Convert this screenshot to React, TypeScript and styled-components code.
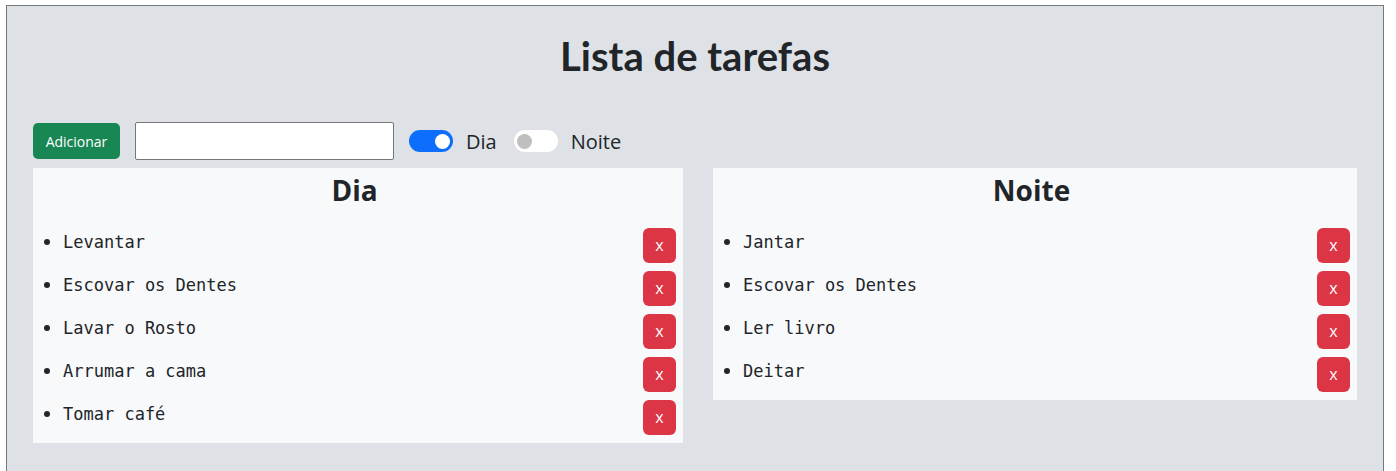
import React, { useState } from "react";
import styled, { createGlobalStyle } from "styled-components";

const GlobalStyle = createGlobalStyle`
  html, body { margin: 0; padding: 0; background: #ffffff; }
  body { font-family: "Open Sans", "Noto Sans", sans-serif; color: #212529; }
  * { box-sizing: border-box; }
`;

const Page = styled.div`
  width: 1378px;
  margin: 5px 0 0 6px;
  border: 1px solid #76797c;
  background: #dee2e6;
  padding: 26px 26px 40px;
`;

const Title = styled.h1`
  margin: 0 0 42px;
  font-family: "Lato", "Open Sans", sans-serif;
  font-size: 40px;
  line-height: 48px;
  font-weight: 700;
  text-align: center;
  color: #212529;
`;

const Toolbar = styled.div`
  display: flex;
  align-items: center;
  height: 38px;
  margin-bottom: 8px;
`;

const AddButton = styled.button`
  width: 87px;
  height: 36px;
  margin-right: 15px;
  border: none;
  border-radius: 5px;
  background: #198754;
  color: #ffffff;
  font-family: "Open Sans", sans-serif;
  font-size: 14px;
  padding: 0;
  cursor: pointer;
`;

const TaskInput = styled.input`
  width: 259px;
  height: 38px;
  margin-right: 15px;
  border: 1px solid #767676;
  border-radius: 2px;
  background: #ffffff;
  font-size: 16px;
  padding: 0 6px;
`;

const SwitchLabel = styled.label`
  display: flex;
  align-items: center;
  gap: 13px;
  margin-right: 17px;
  font-size: 20px;
  color: #212529;
  cursor: pointer;
`;

const Track = styled.span<{ $on: boolean }>`
  display: flex;
  align-items: center;
  justify-content: ${(p) => (p.$on ? "flex-end" : "flex-start")};
  width: 44px;
  height: 22px;
  padding: 0 3px;
  border-radius: 11px;
  background: ${(p) => (p.$on ? "#0d6efd" : "#ffffff")};
`;

const Knob = styled.span<{ $on: boolean }>`
  width: 15px;
  height: 15px;
  border-radius: 50%;
  background: ${(p) => (p.$on ? "#ffffff" : "#bfbfbf")};
`;

const Columns = styled.div`
  display: grid;
  grid-template-columns: 650px 644px;
  gap: 30px;
  align-items: start;
`;

const Panel = styled.section`
  background: #f8f9fa;
  padding: 5px 7px 8px 0;
`;

const PanelTitle = styled.h3`
  margin: 0 0 21px;
  font-size: 28px;
  line-height: 34px;
  font-weight: 700;
  text-align: center;
  color: #212529;
`;

const TaskList = styled.ul`
  margin: 0;
  padding-left: 30px;
  list-style: disc;
`;

const TaskItem = styled.li`
  font-family: "DejaVu Sans Mono", "Liberation Mono", monospace;
  font-size: 17px;
  color: #212529;
  margin-bottom: 8px;
  &:last-child { margin-bottom: 0; }
  &::marker { font-size: 21px; }
`;

const TaskRow = styled.div`
  display: flex;
  justify-content: space-between;
  align-items: flex-start;
`;

const TaskText = styled.span`
  line-height: 24px;
  margin-top: 2px;
`;

const DeleteButton = styled.button`
  width: 33px;
  height: 35px;
  border: none;
  border-radius: 6px;
  background: #dc3545;
  color: #ffffff;
  font-family: "Open Sans", sans-serif;
  font-size: 16px;
  line-height: 1;
  padding: 0 0 2px;
  cursor: pointer;
`;

const Switch: React.FC<{ on: boolean; label: string; onToggle: () => void }> = ({ on, label, onToggle }) => (
  <SwitchLabel onClick={onToggle}>
    <Track $on={on}>
      <Knob $on={on} />
    </Track>
    {label}
  </SwitchLabel>
);

const TaskPanel: React.FC<{ title: string; items: string[] }> = ({ title, items }) => (
  <Panel>
    <PanelTitle>{title}</PanelTitle>
    <TaskList>
      {items.map((t) => (
        <TaskItem key={t}>
          <TaskRow>
            <TaskText>{t}</TaskText>
            <DeleteButton>x</DeleteButton>
          </TaskRow>
        </TaskItem>
      ))}
    </TaskList>
  </Panel>
);

export default function App() {
  const [dia, setDia] = useState(true);
  const [noite, setNoite] = useState(false);
  return (
    <>
      <GlobalStyle />
      <Page>
        <Title>Lista de tarefas</Title>
        <Toolbar>
          <AddButton>Adicionar</AddButton>
          <TaskInput type="text" />
          <Switch on={dia} label="Dia" onToggle={() => setDia(!dia)} />
          <Switch on={noite} label="Noite" onToggle={() => setNoite(!noite)} />
        </Toolbar>
        <Columns>
          <TaskPanel title="Dia" items={["Levantar", "Escovar os Dentes", "Lavar o Rosto", "Arrumar a cama", "Tomar café"]} />
          <TaskPanel title="Noite" items={["Jantar", "Escovar os Dentes", "Ler livro", "Deitar"]} />
        </Columns>
      </Page>
    </>
  );
}
